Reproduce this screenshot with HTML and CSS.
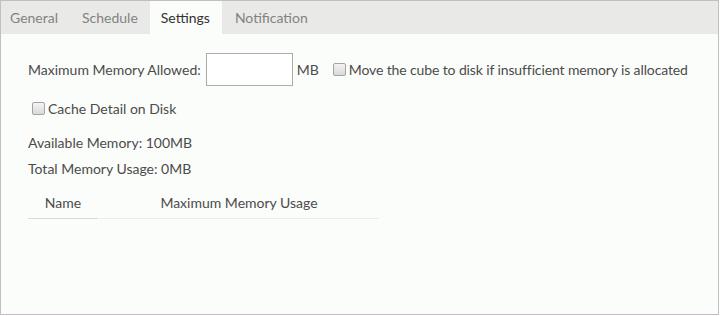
FILE: index.html
```html
<!DOCTYPE html>
<html>
<head>
<meta charset="utf-8">
<link rel="stylesheet" href="styles.css">
</head>
<body>
<div class="panel">
  <div class="tabs">
    <div class="tab">General</div>
    <div class="tab">Schedule</div>
    <div class="tab active">Settings</div>
    <div class="tab last">Notification</div>
  </div>
  <div class="content">
    <div class="row-mem">
      <span>Maximum Memory Allowed:</span>
      <span class="input"></span>
      <span class="unit">MB</span>
      <span class="check"></span>
      <span class="check-label long">Move the cube to disk if insufficient memory is allocated</span>
    </div>
    <div class="row-cache">
      <span class="check"></span>
      <span class="check-label">Cache Detail on Disk</span>
    </div>
    <div class="info first">Available Memory: 100MB</div>
    <div class="info">Total Memory Usage: 0MB</div>
    <div class="table">
      <div class="th name">Name</div>
      <div class="th usage">Maximum Memory Usage</div>
    </div>
  </div>
</div>
</body>
</html>
```
FILE: styles.css
```css
html, body {
  margin: 0;
  padding: 0;
  background: #ffffff;
}
body {
  font-family: Lato, "Open Sans", sans-serif;
  font-size: 14px;
  color: #4b4b4b;
}
.panel {
  width: 719px;
  height: 315px;
  box-sizing: border-box;
  border: 1px solid #c2bec2;
  background: #fbfdfa;
}
.tabs {
  display: flex;
  height: 33px;
  background: #e9eae8;
}
.tab {
  padding: 0 12px;
  line-height: 33px;
  color: #828282;
}
.tab:first-child {
  padding-left: 9px;
}
.tab.active {
  background: #fbfdfa;
  color: #333333;
  padding: 0 12px 0 11px;
}
.tab.last {
  padding-left: 13px;
}
.content {
  padding: 19px 0 0 27px;
}
.row-mem {
  display: flex;
  align-items: center;
  height: 33px;
}
.input {
  width: 87px;
  height: 33px;
  box-sizing: border-box;
  border: 1px solid #ababab;
  background: #ffffff;
  margin-left: 5px;
}
.unit {
  margin-left: 4px;
  margin-right: 14px;
}
.check {
  display: inline-block;
  width: 13px;
  height: 13px;
  box-sizing: border-box;
  border: 1px solid #a4a4a4;
  border-radius: 2px;
  background: linear-gradient(#f4f4f4, #d9d9d9);
  margin-right: 3px;
}
.check-label.long {
  letter-spacing: -0.12px;
}
.row-cache {
  display: flex;
  align-items: center;
  height: 20px;
  margin-top: 12px;
  padding-left: 4px;
}
.info {
  line-height: 20px;
  margin-top: 6px;
}
.info.first {
  margin-top: 15px;
}
.table {
  display: flex;
  width: 351px;
  margin-top: 9px;
}
.th {
  height: 30px;
  line-height: 30px;
  text-align: center;
}
.name {
  width: 70px;
  border-bottom: 1px solid #d9d9d9;
  margin-right: 1px;
}
.usage {
  flex: 1;
  border-bottom: 1px solid #ececec;
}
```
